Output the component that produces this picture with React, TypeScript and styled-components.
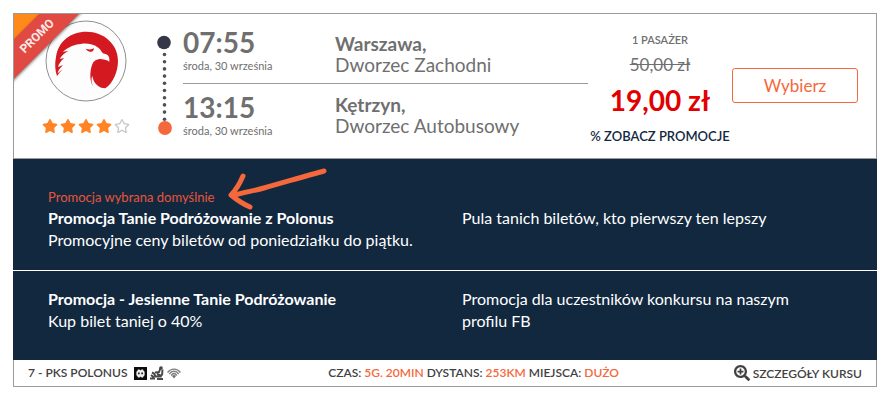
import React from "react";
import styled, { createGlobalStyle } from "styled-components";
import { FaStar, FaRegStar, FaSearchPlus } from "react-icons/fa";

const orange = "#f5683b";
const navy = "#12283f";
const grey = "#6f6f6f";
const line = "#9b9b9b";

const GlobalStyle = createGlobalStyle`
  *, *::before, *::after { box-sizing: border-box; }
  body {
    margin: 0;
    background: #fff;
    font-family: Lato, "Open Sans", sans-serif;
  }
  button { font-family: inherit; cursor: pointer; }
  p, h3 { margin: 0; }
`;

const Page = styled.main`
  padding: 13px 12px 13px 13px;
`;

const Card = styled.article`
  position: relative;
  width: 100%;
`;

const Summary = styled.section`
  position: relative;
  display: grid;
  grid-template-columns: 143px 26px minmax(0, 1fr) 144px 126px;
  padding-right: 18px;
  border: 1px solid ${line};
`;

const Ribbon = styled.div`
  position: absolute;
  top: 0;
  left: 0;
  width: 72px;
  height: 72px;
  overflow: hidden;
  clip-path: polygon(0 0, 100% 0, 0 100%);
`;

const RibbonFold = styled.div`
  width: 36px;
  height: 36px;
  background: #ff8a1c;
  clip-path: polygon(0 0, 100% 0, 0 100%);
`;

const RibbonBand = styled.div`
  position: absolute;
  top: 8px;
  left: -32px;
  width: 110px;
  height: 28px;
  transform: rotate(-45deg);
  background: #e04a43;
  box-shadow: 0 1px 3px rgba(0, 0, 0, 0.5);
  color: #fbe9e8;
  font: 700 12px/28px Roboto, sans-serif;
  text-align: center;
`;

const Carrier = styled.div`
  display: flex;
  flex-direction: column;
  align-items: center;
  gap: 17px;
  padding: 6px 0 25px;
`;

const Rating = styled.div`
  display: flex;
  gap: 2px;
  color: #ff8426;
  svg { width: 16px; height: 14px; }
  svg:last-child { color: #c8c8c8; }
`;

const Track = styled.div`
  padding-top: 21px;
  svg { display: block; }
`;

const Route = styled.div`
  padding-top: 10px;
`;

const Stop = styled.div<{ $last?: boolean }>`
  display: grid;
  grid-template-columns: 152px minmax(0, 1fr);
  align-items: start;
  height: ${(p) => (p.$last ? "64px" : "60px")};
  padding-top: ${(p) => (p.$last ? "7px" : "2px")};
  border-bottom: ${(p) => (p.$last ? "0" : `1px solid ${line}`)};
  color: ${grey};
`;

const Time = styled.time`
  display: block;
  font-size: 28px;
  font-weight: 700;
  line-height: 32px;
`;

const DateText = styled.p`
  font-size: 11px;
  line-height: 16px;
`;

const Place = styled.p<{ $last?: boolean }>`
  padding-top: ${(p) => (p.$last ? "3px" : "7px")};
  font-size: 19px;
  line-height: 21px;
  strong { display: block; }
`;

const Price = styled.div`
  display: flex;
  flex-direction: column;
  align-items: center;
  padding-top: 18px;
  white-space: nowrap;
  color: ${grey};
`;

const Passengers = styled.p`
  font-size: 11px;
  font-weight: 600;
  line-height: 16px;
`;

const OldPrice = styled.del`
  margin-top: 5px;
  font-size: 17px;
  line-height: 24px;
`;

const NewPrice = styled.strong`
  margin-top: 5px;
  color: #e30000;
  font-size: 28px;
  line-height: 36px;
`;

const PromoToggle = styled.button`
  margin-top: 8px;
  padding: 0;
  border: 0;
  background: none;
  color: ${navy};
  font-size: 13px;
  font-weight: 600;
  line-height: 20px;
`;

const SelectButton = styled.button`
  align-self: start;
  height: 35px;
  margin-top: 54px;
  border: 1px solid ${orange};
  border-radius: 3px;
  background: #fff;
  color: ${orange};
  font-size: 17px;
`;

const Promotions = styled.section`
  position: relative;
  background: ${navy};
  color: #fff;
`;

const Promotion = styled.div`
  padding: 17px 1px 28px 35px;
  & + & { border-top: 1px solid #fff; }
  &:has(> :nth-child(2)) { padding: 28px 1px 19px 35px; }
`;

const PromoNote = styled.p`
  color: #e8553c;
  font-size: 13px;
  line-height: 20px;
`;

const PromoGrid = styled.div`
  display: grid;
  grid-template-columns: 1fr 1fr;
  font-size: 16px;
  line-height: 22px;
  h3 { font-size: 16px; font-weight: 700; }
  > * { padding-right: 40px; }
`;

const Pointer = styled.svg`
  position: absolute;
  top: 6px;
  left: 212px;
`;

const Footer = styled.footer`
  display: grid;
  grid-template-columns: 36% minmax(0, 1fr) auto;
  align-items: center;
  height: 27px;
  padding: 0 14px;
  border: 1px solid ${line};
  border-top: 0;
  color: #414141;
  font-size: 12px;
  font-weight: 600;
  line-height: 16px;
  white-space: nowrap;
`;

const Operator = styled.div`
  display: flex;
  align-items: center;
  gap: 4px;
`;

const Amenities = styled.span`
  display: flex;
  align-items: center;
  gap: 3px;
  padding-left: 3px;
`;

const Accent = styled.span`
  color: ${orange};
`;

const DetailsButton = styled.button`
  display: flex;
  align-items: center;
  gap: 3px;
  padding: 0;
  border: 0;
  background: none;
  color: inherit;
  font-size: 12px;
  font-weight: 600;
  svg { width: 16px; height: 16px; }
`;

function EagleLogo() {
  return (
    <svg width="82" height="82" viewBox="134 59 246 246" role="img" aria-label="Polonus">
      <circle cx="257" cy="182" r="120" fill="#fdfdfd" stroke="#8f8f8f" strokeWidth="3" />
      <path
        fill="#d41a20"
        d="M170 227C164 211 163 190 167 170C174 122 211 94 258 94C311 94 353 132 353 181C353 216 337 249 315 264C295 263 279 249 276 226C272 235 273 246 278 258C268 243 268 215 275 194C280 180 292 174 305 177C313 179 320 178 327 184C328 170 325 162 312 160C303 158 304 149 294 142C282 132 264 129 245 130C224 131 205 139 187 154L204 152C194 158 184 165 178 176L192 173C182 181 176 190 173 200L188 194C179 203 173 211 172 219L187 207C179 215 175 221 170 227Z"
      />
      <path fill="#d41a20" d="M256 145C265 148 274 148 281 144C280 152 276 156 270 154C264 153 259 150 256 145Z" />
    </svg>
  );
}

function RouteTrack() {
  const dots = Array.from({ length: 10 }, (_, i) => 19.5 + i * 7.2);
  return (
    <svg width="16" height="102" viewBox="0 0 16 102" aria-hidden="true">
      <circle cx="7" cy="7.5" r="6.8" fill="#333748" />
      {dots.map((y) => (
        <circle key={y} cx="7.5" cy={y} r="1.8" fill="#505050" />
      ))}
      <circle cx="8" cy="93" r="6.9" fill={orange} />
    </svg>
  );
}

function SocketIcon() {
  return (
    <svg width="13" height="13" viewBox="0 0 13 13" role="img" aria-label="Gniazdko">
      <rect width="13" height="13" fill="#0d0d0d" />
      <path
        fill="#f0f0f0"
        d="M4 2.5h1.5l1 1 1-1H9l.6 1.3 1 1v3.4l-1 1L9 10.5H7.5l-1-1-1 1H4l-.6-1.3-1-1V4.800l1-1z"
      />
      <path fill="#222" d="M4 5.5h1.7v1.700H4zM7.3 5.5H9v1.700H7.300z" />
    </svg>
  );
}

function SeatIcon() {
  return (
    <svg width="14" height="14" viewBox="0 0 14 14" role="img" aria-label="Wygodne fotele">
      <g fill="none" stroke="#4a4a4a" strokeWidth="2">
        <path d="M10.5 2L9 6 5 6.5M12.5 3.5l-.5 6M2 6.5l2 1 1.500 3h6M0 12.5h5M7 13h6M1 9l3 2.500M7 8l5 2" />
      </g>
      <circle cx="11" cy="2" r="1.8" fill="#444" />
    </svg>
  );
}

function WifiIcon() {
  return (
    <svg width="14" height="11" viewBox="0 0 14 11" role="img" aria-label="Wi-Fi">
      <g fill="none" stroke="#808080" strokeWidth="1.4">
        <path d="M0.5 4.5C4 0 10 0 13.5 4.5M2.3 6C5 2.3 9 2.3 11.7 6M4.2 7.5C6 4.8 8 4.8 9.8 7.5" />
      </g>
      <path d="M5 8q2-2 4 0l-2 2.6z" fill="#707070" />
    </svg>
  );
}

export default function App() {
  return (
    <>
      <GlobalStyle />
      <Page>
        <Card>
          <Summary>
            <Carrier>
              <EagleLogo />
              <Rating role="img" aria-label="4 z 5 gwiazdek">
                <FaStar />
                <FaStar />
                <FaStar />
                <FaStar />
                <FaRegStar />
              </Rating>
            </Carrier>
            <Track>
              <RouteTrack />
            </Track>
            <Route>
              <Stop>
                <div>
                  <Time>07:55</Time>
                  <DateText>środa, 30 września</DateText>
                </div>
                <Place>
                  <strong>Warszawa,</strong>Dworzec Zachodni
                </Place>
              </Stop>
              <Stop $last>
                <div>
                  <Time>13:15</Time>
                  <DateText>środa, 30 września</DateText>
                </div>
                <Place $last>
                  <strong>Kętrzyn,</strong>Dworzec Autobusowy
                </Place>
              </Stop>
            </Route>
            <Price>
              <Passengers>1 PASAŻER</Passengers>
              <OldPrice>50,00 zł</OldPrice>
              <NewPrice>19,00 zł</NewPrice>
              <PromoToggle type="button">% ZOBACZ PROMOCJE</PromoToggle>
            </Price>
            <SelectButton type="button">Wybierz</SelectButton>
            <Ribbon>
              <RibbonFold />
              <RibbonBand>PROMO</RibbonBand>
            </Ribbon>
          </Summary>
          <Promotions>
            <Promotion>
              <PromoNote>Promocja wybrana domyślnie</PromoNote>
              <PromoGrid>
                <div>
                  <h3>Promocja Tanie Podróżowanie z Polonus</h3>
                  <p>Promocyjne ceny biletów od poniedziałku do piątku.</p>
                </div>
                <p>Pula tanich biletów, kto pierwszy ten lepszy</p>
              </PromoGrid>
            </Promotion>
            <Promotion>
              <PromoGrid>
                <div>
                  <h3>Promocja - Jesienne Tanie Podróżowanie</h3>
                  <p>Kup bilet taniej o 40%</p>
                </div>
                <p>Promocja dla uczestników konkursu na naszym profilu FB</p>
              </PromoGrid>
            </Promotion>
            <Pointer width="106" height="48" viewBox="0 0 106 48" aria-hidden="true">
              <path
                d="M99 6C84 10 57 18 39 23C28 26 16 28 7 31M18 11C15 18 11 25 6 30C12 35 18 39 25 42"
                fill="none"
                stroke={orange}
                strokeWidth="5"
                strokeLinecap="round"
                strokeLinejoin="round"
              />
            </Pointer>
          </Promotions>
          <Footer>
            <Operator>
              7 - PKS POLONUS
              <Amenities>
                <SocketIcon />
                <SeatIcon />
                <WifiIcon />
              </Amenities>
            </Operator>
            <p>
              CZAS: <Accent>5G. 20MIN</Accent> DYSTANS: <Accent>253KM</Accent> MIEJSCA:{" "}
              <Accent>DUŻO</Accent>
            </p>
            <DetailsButton type="button">
              <FaSearchPlus />
              SZCZEGÓŁY KURSU
            </DetailsButton>
          </Footer>
        </Card>
      </Page>
    </>
  );
}
